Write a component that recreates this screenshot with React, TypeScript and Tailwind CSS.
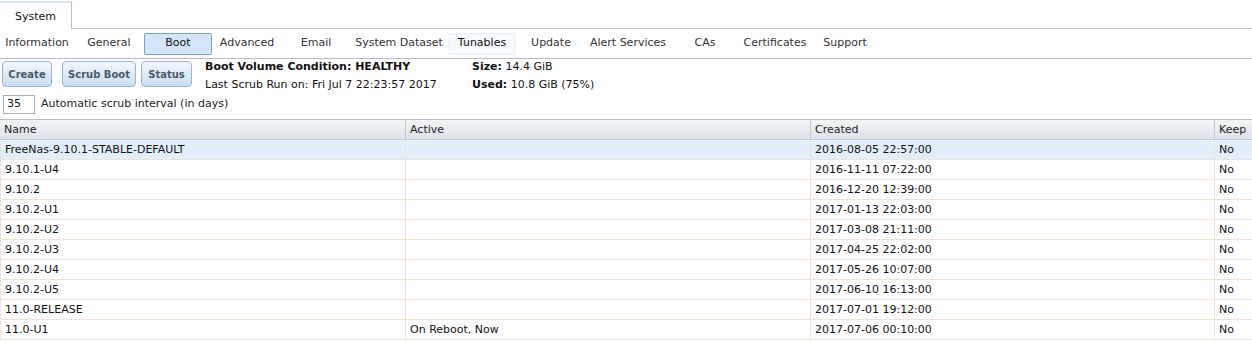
const tabs: [string, string][] = [
  ['Information', 'w-[74px]'],
  ['General', 'w-[68px]'],
  ['Boot', 'w-[68px]'],
  ['Advanced', 'w-[68px]'],
  ['Email', 'w-[68px]'],
  ['System Dataset', 'w-[96px]'],
  ['Tunables', 'w-[68px]'],
  ['Update', 'w-[68px]'],
  ['Alert Services', 'w-[84px]'],
  ['CAs', 'w-[68px]'],
  ['Certificates', 'w-[70px]'],
  ['Support', 'w-[68px]'],
]

const rows = [
  { name: 'FreeNas-9.10.1-STABLE-DEFAULT', active: '', created: '2016-08-05 22:57:00', keep: 'No' },
  { name: '9.10.1-U4', active: '', created: '2016-11-11 07:22:00', keep: 'No' },
  { name: '9.10.2', active: '', created: '2016-12-20 12:39:00', keep: 'No' },
  { name: '9.10.2-U1', active: '', created: '2017-01-13 22:03:00', keep: 'No' },
  { name: '9.10.2-U2', active: '', created: '2017-03-08 21:11:00', keep: 'No' },
  { name: '9.10.2-U3', active: '', created: '2017-04-25 22:02:00', keep: 'No' },
  { name: '9.10.2-U4', active: '', created: '2017-05-26 10:07:00', keep: 'No' },
  { name: '9.10.2-U5', active: '', created: '2017-06-10 16:13:00', keep: 'No' },
  { name: '11.0-RELEASE', active: '', created: '2017-07-01 19:12:00', keep: 'No' },
  { name: '11.0-U1', active: 'On Reboot, Now', created: '2017-07-06 00:10:00', keep: 'No' },
]

function ToolButton({ label, className = '' }: { label: string; className?: string }) {
  return (
    <button
      className={`h-[26px] whitespace-nowrap rounded-[4px] border border-[#9db5cc] bg-gradient-to-b from-[#f3f8fd] to-[#c9ddf1] px-0 text-[10px] font-bold text-[#4b5868] ${className}`}
    >
      {label}
    </button>
  )
}

export default function App() {
  return (
    <div className="h-[347px] w-[1252px] overflow-hidden bg-white font-['DejaVu_Sans',Verdana,sans-serif] text-[11px] text-[#222]">
      {/* Top tab */}
      <div className="flex h-[29px] items-end">
        <div className="flex h-[28px] w-[72px] items-center justify-center border-r border-t-2 border-[#b8bcca] border-t-[#dbe6f3] pt-[2px] text-[#111]">
          System
        </div>
        <div className="h-px flex-1 bg-[#b8bcca]" />
      </div>

      {/* Sub tabs */}
      <div className="flex h-[30px] items-center gap-[1px] border-b border-[#b8bcca]">
        {tabs.map(([t, w]) => (
          <div
            key={t}
            className={`flex h-[22px] shrink-0 items-center justify-center whitespace-nowrap rounded-[2px] border ${w} ${
              t === 'Boot'
                ? 'border-[#7f9fc4] bg-[#d3e5f8] text-[#111]'
                : t === 'Tunables'
                  ? 'border-[#eef3f9] bg-[#f7fafd] text-[#111]'
                  : 'border-transparent text-[#333]'
            }`}
          >
            {t}
          </div>
        ))}
      </div>

      {/* Toolbar */}
      <div className="flex h-[61px] flex-col border-b border-[#b8bcca]">
        <div className="flex h-[30px]">
          <div className="mt-[2px] flex">
            <ToolButton label="Create" className="ml-[2px] w-[50px]" />
            <ToolButton label="Scrub Boot" className="ml-[10px] w-[74px]" />
            <ToolButton label="Status" className="ml-[5px] w-[51px]" />
          </div>
          <div className="ml-[13px] flex w-[267px] shrink-0 flex-col leading-[18px] text-[#111]">
            <div className="mt-[-1px] font-bold">Boot Volume Condition: HEALTHY</div>
            <div>Last Scrub Run on: Fri Jul 7 22:23:57 2017</div>
          </div>
          <div className="flex flex-col leading-[18px] text-[#111]">
            <div className="mt-[-1px]">
              <span className="font-bold">Size:</span> 14.4 GiB
            </div>
            <div>
              <span className="font-bold">Used:</span> 10.8 GiB (75%)
            </div>
          </div>
        </div>
        <div className="mt-[6px] flex items-center">
          <div className="ml-[3px] flex h-[19px] w-[32px] items-center border border-[#a5acb5] pl-[3px] text-[#111]">35</div>
          <div className="ml-[6px] text-[#222]">Automatic scrub interval (in days)</div>
        </div>
      </div>

      {/* Grid */}
      <div className="grid grid-cols-[405px_405px_404px_1fr]">
        {['Name', 'Active', 'Created', 'Keep'].map((h, i) => (
          <div
            key={h}
            className={`flex h-[20px] items-center border-b border-[#c2c6ce] bg-gradient-to-b from-[#f2f4f7] to-[#dde3ea] pl-[4px] pt-[2px] text-[#222] ${
              i > 0 ? 'border-l' : ''
            }`}
          >
            {h}
          </div>
        ))}
        {rows.map((r, ri) => {
          const bg = ri === 0 ? 'bg-[#e2eefa]' : 'bg-white'
          const cells = [r.name, r.active, r.created, r.keep]
          return cells.map((c, ci) => (
            <div
              key={`${ri}-${ci}`}
              className={`flex h-[20px] items-center border-b border-l border-[#efe2d6] pl-[4px] pt-[2px] text-[#111] ${bg}`}
            >
              {c}
            </div>
          ))
        })}
      </div>
    </div>
  )
}
